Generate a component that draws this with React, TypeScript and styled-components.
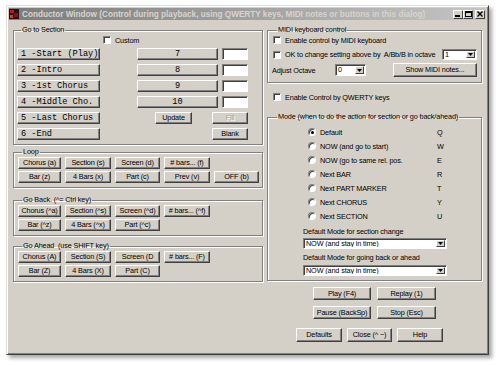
import React from "react";
import styled, { createGlobalStyle } from "styled-components";

const Global = createGlobalStyle`
  html, body { margin: 0; padding: 0; background: #fff; }
  body {
    width: 500px; height: 365px; overflow: hidden;
    font-family: "Liberation Sans", Arial, sans-serif;
    font-size: 7.3px; letter-spacing: -0.15px; color: #000;
  }
  * { box-sizing: border-box; }
`;

const Window = styled.div`
  margin: 5px 0 0 6px;
  width: 483px;
  height: 350px;
  background: #d4d0c8;
  border: 1px solid;
  border-color: #e4e0d8 #404040 #404040 #e4e0d8;
  box-shadow: inset 1px 1px #fff, inset -1px -1px #808080, 3px 3px 4px rgba(0, 0, 0, 0.35);
  padding: 2px;
  display: flex;
  flex-direction: column;
`;

const TitleBar = styled.div`
  height: 12px;
  display: flex;
  align-items: center;
  gap: 3px;
  padding: 0 1px 0 0;
  background: linear-gradient(90deg, #7c7c7c 0%, #a8a8a8 60%, #c4c4c4 100%);
`;

const TitleText = styled.div`
  flex: 1;
  font-weight: bold;
  font-size: 8.2px;
  letter-spacing: 0;
  color: #d8d4cc;
  white-space: nowrap;
  overflow: hidden;
`;

const TitleBtns = styled.div`
  display: flex;
  align-items: center;
`;

const TitleBtn = styled.div<{ $gap?: boolean }>`
  width: 10px;
  height: 9px;
  margin-left: ${(p) => (p.$gap ? "2px" : "0")};
  background: #d4d0c8;
  border: 1px solid;
  border-color: #fff #404040 #404040 #fff;
  display: flex;
  align-items: center;
  justify-content: center;
`;

const Body = styled.div`
  display: flex;
  gap: 4px;
  padding: 5px 4px 0 4px;
`;

const Col = styled.div<{ $w: number }>`
  width: ${(p) => p.$w}px;
  display: flex;
  flex-direction: column;
`;

const Group = styled.fieldset<{ $mt?: number; $pl?: number; $pb?: number }>`
  margin: ${(p) => p.$mt ?? 0}px 0 0 0;
  padding: 0 4px ${(p) => p.$pb ?? 4}px ${(p) => p.$pl ?? 3}px;
  border: 1px solid #808080;
  box-shadow: 1px 1px 0 #fff, inset 1px 1px 0 #fff;
  min-width: 0;
`;

const Legend = styled.legend`
  padding: 0 1px;
  margin-left: 4px;
  line-height: 10px;
  white-space: nowrap;
`;

const SectionGrid = styled.div`
  display: grid;
  grid-template-columns: 83px 37px 18px 37px 20px 6px 4px 26px;
  grid-template-rows: 9px repeat(6, 12px);
  row-gap: 4px;
`;

const BtnGrid = styled.div`
  display: grid;
  grid-template-columns: 43px 46px 45px 46px 45px;
  grid-auto-rows: 12px;
  column-gap: 4px;
  row-gap: 2px;
`;

const Btn = styled.button<{ $col?: string; $mono?: boolean; $left?: boolean; $w?: number; $h?: number; $disabled?: boolean }>`
  grid-column: ${(p) => p.$col ?? "auto"};
  width: ${(p) => (p.$w ? `${p.$w}px` : "auto")};
  height: ${(p) => (p.$h ? `${p.$h}px` : "100%")};
  margin: 0;
  padding: ${(p) => (p.$left ? "0 0 0 3px" : "0")};
  background: #d4d0c8;
  border: 1px solid;
  border-color: #fff #404040 #404040 #fff;
  box-shadow: inset -1px -1px 0 #808080;
  font-family: ${(p) => (p.$mono ? '"Liberation Mono", "Courier New", monospace' : '"Liberation Sans", Arial, sans-serif')};
  font-size: ${(p) => (p.$mono ? "8.6px" : "7.3px")};
  letter-spacing: ${(p) => (p.$mono ? "0" : "-0.15px")};
  color: ${(p) => (p.$disabled ? "#a8a49c" : "#000")};
  text-shadow: ${(p) => (p.$disabled ? "1px 1px 0 #fff" : "none")};
  text-align: ${(p) => (p.$left ? "left" : "center")};
  line-height: 1;
  white-space: nowrap;
  overflow: hidden;
`;

const TextBox = styled.div<{ $col?: string }>`
  grid-column: ${(p) => p.$col ?? "auto"};
  background: #fff;
  border: 1px solid;
  border-color: #808080 #fff #fff #808080;
  box-shadow: inset 1px 1px 0 #404040;
  height: 100%;
`;

const CheckRow = styled.label<{ $col?: string; $ml?: number; $mt?: number }>`
  grid-column: ${(p) => p.$col ?? "auto"};
  display: flex;
  align-items: center;
  gap: 4px;
  height: 10px;
  margin-left: ${(p) => p.$ml ?? 0}px;
  margin-top: ${(p) => p.$mt ?? 0}px;
  white-space: nowrap;
`;

const Check = styled.span`
  width: 8px;
  height: 8px;
  flex: none;
  background: #fff;
  border: 1px solid;
  border-color: #808080 #fff #fff #808080;
  box-shadow: inset 1px 1px 0 #404040;
`;

const Row = styled.div<{ $mt?: number; $h: number }>`
  display: flex;
  align-items: center;
  height: ${(p) => p.$h}px;
  margin-top: ${(p) => p.$mt ?? 0}px;
  white-space: nowrap;
`;

const Label = styled.span<{ $w?: number; $ml?: number }>`
  width: ${(p) => (p.$w ? `${p.$w}px` : "auto")};
  margin-left: ${(p) => p.$ml ?? 0}px;
  flex: none;
`;

const Spacer = styled.div`
  flex: 1;
`;

const ComboBox = styled.div<{ $w: number; $h: number; $ml?: number }>`
  width: ${(p) => p.$w}px;
  height: ${(p) => p.$h}px;
  margin-left: ${(p) => p.$ml ?? 0}px;
  flex: none;
  display: flex;
  align-items: stretch;
  background: #fff;
  border: 1px solid;
  border-color: #808080 #fff #fff #808080;
  box-shadow: inset 1px 1px 0 #404040;
  padding: 1px 1px 1px 2px;
`;

const ComboText = styled.span`
  flex: 1;
  line-height: 1;
  display: flex;
  align-items: center;
  overflow: hidden;
  white-space: nowrap;
`;

const ComboArrow = styled.span`
  width: 9px;
  flex: none;
  background: #d4d0c8;
  border: 1px solid;
  border-color: #fff #404040 #404040 #fff;
  display: flex;
  align-items: center;
  justify-content: center;
`;

const RadioGrid = styled.div`
  display: grid;
  grid-template-columns: 129px auto;
  grid-auto-rows: 14px;
  margin: 3px 0 0 35px;
  align-items: center;
`;

const RadioItem = styled.label`
  display: flex;
  align-items: center;
  gap: 4px;
  white-space: nowrap;
`;

const Radio = styled.span<{ $on?: boolean }>`
  width: 8px;
  height: 8px;
  flex: none;
  border-radius: 50%;
  background: #fff;
  border: 1px solid;
  border-color: #808080 #fff #fff #808080;
  box-shadow: inset 1px 1px 0 #404040;
  display: flex;
  align-items: center;
  justify-content: center;
  &::after {
    content: "";
    width: 3px;
    height: 3px;
    border-radius: 50%;
    background: ${(p) => (p.$on ? "#000" : "transparent")};
  }
`;

const Key = styled.span`
  padding-left: 0;
`;

const ModeBlock = styled.div`
  margin-left: 30px;
  display: flex;
  flex-direction: column;
`;

const ButtonRow = styled.div<{ $mt: number; $gap: number; $pr?: number }>`
  display: flex;
  justify-content: center;
  gap: ${(p) => p.$gap}px;
  margin-top: ${(p) => p.$mt}px;
  padding-right: ${(p) => p.$pr ?? 0}px;
`;

const Arrow = () => (
  <svg width="5" height="3" viewBox="0 0 5 3">
    <path d="M0 0h5L2.5 3z" fill="#000" />
  </svg>
);

const Combo = ({ w, h, ml, text }: { w: number; h: number; ml?: number; text: string }) => (
  <ComboBox $w={w} $h={h} $ml={ml}>
    <ComboText>{text}</ComboText>
    <ComboArrow>
      <Arrow />
    </ComboArrow>
  </ComboBox>
);

const AppIcon = () => (
  <svg width="10" height="10" viewBox="0 0 10 10">
    <rect x="0" y="0" width="10" height="10" fill="#2a1010" />
    <rect x="1" y="1" width="4" height="3" fill="#b02020" />
    <rect x="5" y="4" width="4" height="4" fill="#7a1818" />
    <rect x="1" y="6" width="3" height="3" fill="#d04040" />
  </svg>
);

const sectionRows = [
  ["1 -Start (Play)", "7"],
  ["2 -Intro", "8"],
  ["3 -1st Chorus", "9"],
  ["4 -Middle Cho.", "10"],
];

const loop = [
  ["Chorus (a)", "Section (s)", "Screen (d)", "# bars... (f)"],
  ["Bar (z)", "4 Bars (x)", "Part (c)", "Prev (v)", "OFF (b)"],
];
const back = [
  ["Chorus (^a)", "Section (^s)", "Screen (^d)", "# bars... (^f)"],
  ["Bar (^z)", "4 Bars (^x)", "Part (^c)"],
];
const ahead = [
  ["Chorus (A)", "Section (S)", "Screen (D", "# bars... (F)"],
  ["Bar (Z)", "4 Bars (X)", "Part (C)"],
];

const modes: [string, string][] = [
  ["Default", "Q"],
  ["NOW (and go to start)", "W"],
  ["NOW (go to same rel. pos.", "E"],
  ["Next BAR", "R"],
  ["Next PART MARKER", "T"],
  ["Next CHORUS", "Y"],
  ["Next SECTION", "U"],
];

const ButtonSet = ({ rows }: { rows: string[][] }) => (
  <BtnGrid>
    {rows.map((r, i) =>
      r.map((t, j) => (
        <Btn key={`${i}-${j}`} $col={`${j + 1}`} style={{ gridRow: i + 1 }}>
          {t}
        </Btn>
      ))
    )}
  </BtnGrid>
);

export default function App() {
  return (
    <>
      <Global />
      <Window>
        <TitleBar>
          <AppIcon />
          <TitleText>
            Conductor Window (Control during playback, using QWERTY keys, MIDI notes or buttons in this dialog)
          </TitleText>
          <TitleBtns>
            <TitleBtn>
              <svg width="6" height="6" viewBox="0 0 6 6">
                <rect x="0" y="4" width="5" height="2" fill="#000" />
              </svg>
            </TitleBtn>
            <TitleBtn>
              <svg width="7" height="6" viewBox="0 0 7 6">
                <rect x="0.5" y="0.5" width="6" height="5" fill="none" stroke="#000" />
                <rect x="0" y="0" width="7" height="2" fill="#000" />
              </svg>
            </TitleBtn>
            <TitleBtn $gap>
              <svg width="6" height="6" viewBox="0 0 6 6">
                <path d="M0.5 0.5L5.5 5.5M5.5 0.5L0.5 5.5" stroke="#000" strokeWidth="1.4" />
              </svg>
            </TitleBtn>
          </TitleBtns>
        </TitleBar>
        <Body>
          <Col $w={250}>
            <Group $pb={4}>
              <Legend>Go to Section</Legend>
              <SectionGrid>
                <CheckRow $col="2 / span 6" $ml={3}>
                  <Check />
                  Custom
                </CheckRow>
                {sectionRows.map(([a, b], i) => (
                  <React.Fragment key={a}>
                    <Btn $col="1" $mono $left style={{ gridRow: i + 2 }}>
                      {a}
                    </Btn>
                    <Btn $col="3 / span 4" $mono style={{ gridRow: i + 2 }}>
                      {b}
                    </Btn>
                    <TextBox $col="8" style={{ gridRow: i + 2 }} />
                  </React.Fragment>
                ))}
                <Btn $col="1" $mono $left style={{ gridRow: 6 }}>
                  5 -Last Chorus
                </Btn>
                <Btn $col="4" style={{ gridRow: 6 }}>
                  Update
                </Btn>
                <Btn $col="6 / span 3" $disabled style={{ gridRow: 6 }}>
                  Fill
                </Btn>
                <Btn $col="1" $mono $left style={{ gridRow: 7 }}>
                  6 -End
                </Btn>
                <Btn $col="6 / span 3" style={{ gridRow: 7 }}>
                  Blank
                </Btn>
              </SectionGrid>
            </Group>
            <Group $mt={2} $pl={4}>
              <Legend>Loop</Legend>
              <ButtonSet rows={loop} />
            </Group>
            <Group $mt={7} $pl={4}>
              <Legend>Go Back. (^= Ctrl key)</Legend>
              <ButtonSet rows={back} />
            </Group>
            <Group $mt={5} $pl={4}>
              <Legend>Go Ahead&nbsp; (use SHIFT key)</Legend>
              <ButtonSet rows={ahead} />
            </Group>
          </Col>
          <Col $w={215}>
            <Group $pl={5} $pb={5}>
              <Legend>MIDI keyboard control</Legend>
              <CheckRow>
                <Check />
                Enable control by MIDI keyboard
              </CheckRow>
              <Row $h={11} $mt={4}>
                <CheckRow>
                  <Check />
                  OK to change setting above by&nbsp; A/Bb/B in octave
                </CheckRow>
                <Spacer />
                <Combo w={35} h={11} text="1" />
              </Row>
              <Row $h={14} $mt={3}>
                <Label $w={63} $ml={-1}>Adjust Octave</Label>
                <Combo w={31} h={12} text="0" />
                <Spacer />
                <Btn $w={84} $h={14}>Show MIDI notes...</Btn>
              </Row>
            </Group>
            <CheckRow $ml={6} $mt={9}>
              <Check />
              Enable Control by QWERTY keys
            </CheckRow>
            <Group $mt={10} $pl={5} $pb={4}>
              <Legend>Mode (when to do the action for section or go back/ahead)</Legend>
              <RadioGrid>
                {modes.map(([t, k], i) => (
                  <React.Fragment key={t}>
                    <RadioItem>
                      <Radio $on={i === 0} />
                      {t}
                    </RadioItem>
                    <Key>{k}</Key>
                  </React.Fragment>
                ))}
              </RadioGrid>
              <ModeBlock>
                <Row $h={10} $mt={3}>Default Mode for section change</Row>
                <Row $h={11} $mt={2}>
                  <Combo w={144} h={11} text="NOW (and stay in time)" />
                </Row>
                <Row $h={10} $mt={3}>Default Mode for going back or ahead</Row>
                <Row $h={11} $mt={3}>
                  <Combo w={144} h={11} text="NOW (and stay in time)" />
                </Row>
              </ModeBlock>
            </Group>
            <ButtonRow $mt={6} $gap={6}>
              <Btn $w={58} $h={13}>Play (F4)</Btn>
              <Btn $w={59} $h={13}>Replay (1)</Btn>
            </ButtonRow>
            <ButtonRow $mt={6} $gap={6}>
              <Btn $w={58} $h={13}>Pause (BackSp)</Btn>
              <Btn $w={59} $h={13}>Stop (Esc)</Btn>
            </ButtonRow>
            <ButtonRow $mt={9} $gap={5} $pr={10}>
              <Btn $w={46} $h={14}>Defaults</Btn>
              <Btn $w={45} $h={14}>Close (^ ~)</Btn>
              <Btn $w={46} $h={14}>Help</Btn>
            </ButtonRow>
          </Col>
        </Body>
      </Window>
    </>
  );
}
